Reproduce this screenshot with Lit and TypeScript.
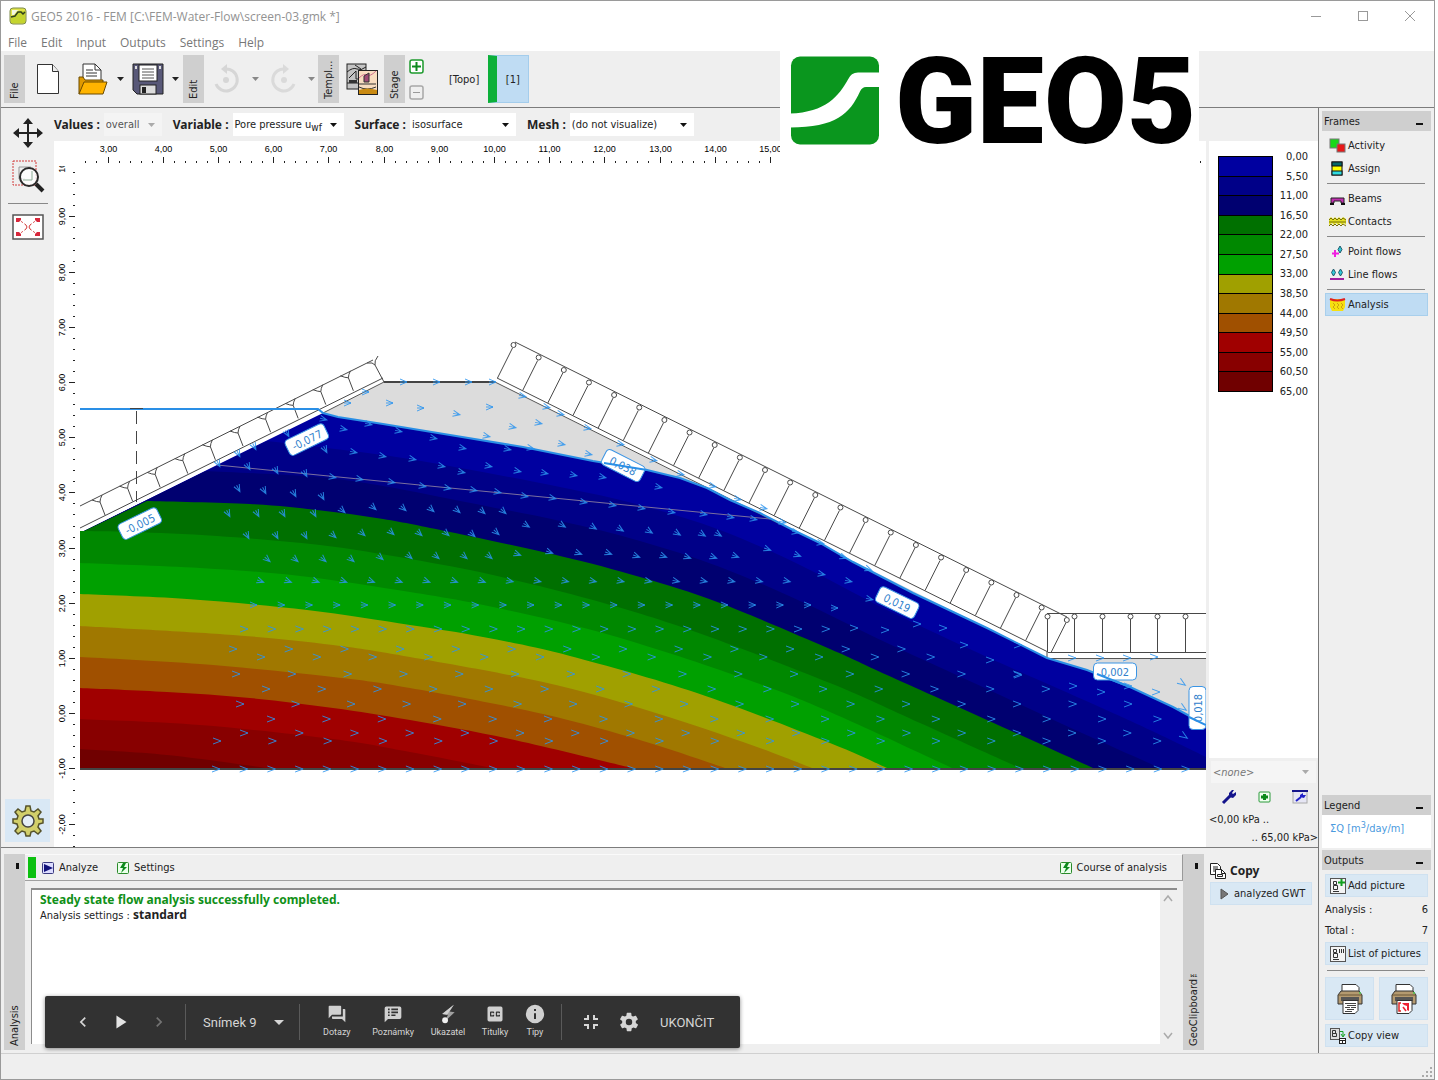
import { LitElement, html, svg, css } from "lit";
import { customElement } from "lit/decorators.js";

type P = [number, number];

const ui = css`
  * { box-sizing: border-box; }
  button {
    font: inherit; color: inherit; background: none; border: 0; padding: 0; margin: 0;
    display: flex; align-items: center; text-align: left; white-space: nowrap;
  }
  svg { display: block; flex: none; }
`;

/* ---------- model data ---------- */

const SURFACE: P[] = [[323, 413], [338, 417], [383, 424], [450, 435], [523, 447], [593, 461], [647, 470], [680, 478],
  [707, 488], [730, 500], [760, 513], [793, 530], [820, 543], [853, 562], [913, 593], [987, 628], [1047, 658],
  [1087, 670], [1130, 687], [1173, 707], [1206, 725]];

const BANDS: { fill: string; top: P[] }[] = [
  { fill: "#0000a0", top: [[80, 533], [217, 465], ...SURFACE] },
  { fill: "#000088", top: [[80, 533], [267, 441], [383, 455], [460, 468], [560, 487], [640, 505], [720, 530], [800, 565], [887, 610], [987, 657], [1093, 704], [1150, 730], [1206, 757]] },
  { fill: "#000070", top: [[80, 533], [206, 471], [317, 477], [383, 486], [460, 501], [560, 521], [640, 541], [720, 567], [800, 601], [887, 643], [987, 689], [1093, 738], [1160, 768]] },
  { fill: "#007000", top: [[80, 533], [147, 501], [250, 504], [317, 510], [383, 519], [450, 532], [560, 556], [640, 577], [720, 603], [830, 649], [887, 675], [987, 720], [1093, 768]] },
  { fill: "#008800", top: [[80, 531], [133, 532], [217, 536], [320, 545], [410, 559], [493, 575], [593, 600], [693, 631], [830, 683], [920, 723], [1020, 768]] },
  { fill: "#00a000", top: [[80, 563], [200, 568], [300, 576], [410, 592], [493, 607], [610, 635], [743, 678], [830, 712], [952, 768]] },
  { fill: "#a0a000", top: [[80, 594], [187, 599], [307, 610], [410, 625], [483, 637], [570, 656], [697, 693], [830, 743], [887, 768]] },
  { fill: "#a07800", top: [[80, 626], [233, 635], [333, 645], [410, 657], [543, 682], [643, 709], [743, 742], [812, 768]] },
  { fill: "#a05000", top: [[80, 657], [200, 664], [333, 677], [410, 688], [543, 714], [643, 741], [725, 768]] },
  { fill: "#a00000", top: [[80, 688], [167, 692], [250, 698], [333, 708], [410, 720], [510, 739], [632, 768]] },
  { fill: "#880000", top: [[80, 719], [200, 725], [333, 739], [410, 752], [492, 768]] },
  { fill: "#700000", top: [[80, 749], [167, 755], [267, 768]] },
];

const row = (x: number, y: number, step: number, n: number): P[] =>
  Array.from({ length: n }, (_, i): P => [x + step * i, y]);

const FLOW: P[] = [
  ...row(216, 769, 27.7, 36), ...row(217, 741, 55.3, 18), ...row(244, 733, 55.2, 17), ...row(271, 719, 55.4, 17),
  ...row(240, 704, 55.5, 17), ...row(266, 689, 55.7, 15), ...row(236, 674, 55.8, 15), ...row(261, 657, 55.8, 13),
  ...row(233, 649, 55.7, 13), ...row(244, 629, 27.7, 22), ...row(253, 605, 27.7, 21), ...row(260, 581, 27.7, 20),
  [267, 559], [295, 559], [323, 559], [351, 559], [380, 557], [409, 556], [436, 556], [464, 556], [489, 556], [517, 554],
  [549, 552], [578, 553], [608, 553], [636, 556], [663, 556], [687, 557], [713, 557], [735, 556],
  [247, 535], [276, 535], [305, 535], [333, 535], [362, 533], [391, 532], [419, 533], [446, 533], [472, 534], [496, 532],
  [228, 513], [257, 513], [283, 513], [314, 513], [342, 510], [373, 507], [403, 508], [431, 509], [457, 510], [482, 511],
  [503, 511], [526, 525], [562, 525], [593, 527], [620, 529], [649, 531], [677, 533], [702, 534], [718, 534],
  [238, 488], [264, 490], [294, 493], [322, 496],
  [218, 463], [248, 466], [276, 470], [305, 473], [332, 477], [359, 479], [391, 482], [422, 486], [447, 488], [473, 490],
  [497, 492], [524, 496], [552, 498], [583, 502], [612, 505], [641, 508], [671, 512], [703, 514], [730, 517], [753, 519],
  [323, 419], [343, 429], [325, 449], [353, 452], [382, 456], [412, 459], [441, 466], [398, 431], [433, 438], [462, 448],
  [507, 449], [530, 448], [488, 466], [461, 472], [517, 471], [544, 473], [573, 475], [602, 477], [658, 487],
  [238, 453], [254, 446], [287, 433], [347, 403], [365, 392], [389, 403], [420, 408], [403, 382], [436, 382], [468, 382],
  [492, 382], [368, 424], [456, 414], [489, 407], [512, 427], [538, 423], [486, 436], [561, 444], [588, 454], [522, 396],
  [546, 407], [560, 414], [587, 428], [620, 444], [653, 460], [680, 474], [712, 486], [737, 499], [763, 508], [782, 522],
  [795, 532], [820, 543], [767, 549], [797, 555], [821, 574], [848, 581], [869, 599], [834, 608], [854, 628], [885, 630],
  [917, 624], [943, 628], [964, 645], [1018, 645], [990, 660], [843, 557], [868, 569], [1018, 675], [1073, 686],
  [1101, 692], [1128, 686], [1156, 692], [1182, 683], [1183, 708], [1184, 736], [1072, 658], [1100, 658], [1127, 658],
  [1154, 657],
];

const flowAngle = ([x, y]: P) => {
  if (y === 736 || y === 683 || y === 708) return 35;
  if (y > 600) return 0;
  if (y > 570) return x > 500 ? 12 : 20;
  if (y > 545) return x > 500 ? 20 : 40;
  if (x < 330) return y > 415 && y !== 419 ? 62 : 15;
  if (y > 500 && x < 520) return 42;
  if (y > 520 && x < 740) return 32;
  return y < 410 && x < 500 ? 0 : 12;
};

const LABELS: [string, number, number, number][] = [
  ["-0,077", 307, 440, -26], ["-0,005", 140, 524, -26], ["0,038", 623, 466, 27],
  ["0,019", 897, 603, 26], ["0,002", 1115, 672, 0], ["0,018", 1198, 708, -90],
];

const fmt = (n: number) => n.toFixed(2).replace(".", ",");
const pts = (a: P[]) => a.map((p) => p.join(",")).join(" ");

/* Curve through the points; stretches left of `from` stay straight. */
const curve = (a: P[], from: number) => {
  let d = `M${a[0]}`;
  for (let i = 0; i < a.length - 1; i++) {
    const p1 = a[i], p2 = a[i + 1];
    if (i < from) { d += `L${p2}`; continue; }
    const p0 = a[Math.max(i - 1, from)], p3 = a[Math.min(i + 2, a.length - 1)];
    d += `C${p1[0] + (p2[0] - p0[0]) / 6} ${p1[1] + (p2[1] - p0[1]) / 6} ${p2[0] - (p3[0] - p1[0]) / 6} ${p2[1] - (p3[1] - p1[1]) / 6} ${p2}`;
  }
  return `${d}L${a[a.length - 1][0]} 768H80Z`;
};

@customElement("model-view")
class ModelView extends LitElement {
  static styles = css`
    :host { display: block; overflow: hidden; background: #fff; min-height: 0; }
    svg { display: block; width: 100%; height: 100%; }
    .num { font: 9px "Liberation Sans", sans-serif; fill: #000; text-anchor: middle; }
    .tick { stroke: #222; fill: none; }
    .hatch { stroke: #484848; fill: none; }
    .soil { stroke: #555; fill: none; }
    .arrow { stroke: #2c94ee; fill: none; stroke-opacity: 0.85; }
    .water { stroke: #2a8fe6; stroke-width: 2; fill: none; }
    .tag { fill: #fff; stroke: #3a94e4; }
    .tagtext { font: 11px "DejaVu Sans Condensed", "Noto Sans", sans-serif; fill: #2f80cc; text-anchor: middle; }
  `;

  private rulers() {
    const X = (v: number) => Math.round(107.5 + 55.2 * (v - 3)) + 0.5;
    const Y = (v: number) => Math.round(382 + 55.2 * (6 - v)) + 0.5;
    let marks = "";
    for (let i = 13; i < 115; i++) {
      const x = X(i / 5);
      marks += i % 5 ? `M${x} 161v2` : `M${x} 157v6`;
    }
    for (let i = -12; i < 50; i++) {
      const y = Y(i / 5);
      marks += i % 5 ? `M73 ${y}h2` : `M69 ${y}h6`;
    }
    const xs = Array.from({ length: 13 }, (_, i) => i + 3);
    const ys = Array.from({ length: 13 }, (_, i) => i - 2);
    return svg`
      <path class="tick" d=${marks}></path>
      ${xs.map((v) => svg`<text class="num" x=${X(v)} y="152">${fmt(v)}</text>`)}
      <g clip-path="url(#ruler)">
        ${ys.map((v) => svg`<text class="num" transform="translate(65 ${Y(v)}) rotate(-90)">${fmt(v)}</text>`)}
      </g>`;
  }

  private hatches() {
    let d = "M80 506L373 360M80 528L383 378M515 342L1067 617M497 378L1048 652M1047 613.5H1206M1048 652.5H1206M1047 652V659";
    const posts: P[] = [];
    for (let i = 0; i < 10; i++) {
      const x = 105 + 27.6 * i, y = 515 - 13.8 * i;
      d += `M${x} ${y}L${x - 5} ${y - 13}Q${x - 8} ${y - 13} ${x - 13} ${y - 15}M${x - 5} ${y - 13}Q${x - 5} ${y - 16} ${x - 3} ${y - 20}`;
    }
    d += "M384 382L375 365Q373 362 367 363M375 365Q374 361 378 356";
    for (let i = 0; i < 23; i++) {
      const x = 513.5 + 25.15 * i, y = 345 + 12.5 * i;
      posts.push([x, y]);
      d += `M${x - 1} ${y + 3}L${x - 16} ${y + 33}`;
    }
    for (let i = 0; i < 6; i++) {
      const x = Math.round(1046.5 + 27.7 * i) + 0.5;
      posts.push([x, 616.5]);
      d += `M${x} 619V652`;
    }
    return svg`<path class="hatch" d=${d}></path>
      ${posts.map(([x, y]) => svg`<circle class="hatch" cx=${x} cy=${y} r="2.5"></circle>`)}`;
  }

  render() {
    return html`<svg viewBox="54 141 1152 706" preserveAspectRatio="xMinYMin slice" role="img" aria-label="Pore pressure isosurfaces">
      <defs><clipPath id="ruler"><rect x="54" y="166" width="26" height="681"></rect></clipPath></defs>
      ${this.rulers()}
      <polygon fill="#dcdcdc" points="323,413 384,382 495,382 1047,658 1206,658 1206,725 1047,670 640,480"></polygon>
      ${BANDS.map((b, i) => svg`<path fill=${b.fill} d=${curve(b.top, i === 0 ? 99 : i < 4 ? 1 : 0)}></path>`)}
      <polyline class="soil" points="323,413 384,382"></polyline>
      <path class="soil" d="M495 382L780 524M1047 658.5H1206"></path>
      <path stroke="#7a6f9e" fill="none" d="M217 465L450 488L770 519"></path>
      <path stroke="#444" stroke-width="2" d="M384 382H495"></path>
      <path stroke="#444" stroke-width="2" d="M80 769H1206"></path>
      <path stroke="#444" stroke-dasharray="13 7" d="M136.500 411V502"></path>
      ${this.hatches()}
      <polyline class="water" points="80,409 318,409 ${pts(SURFACE)}"></polyline>
      <path stroke="#444" d="M130 408.500H143"></path>
      ${LABELS.map(this.tag)}
      <path class="water" d="M604 463L647 470M1097 674L1130 687M1189 717L1206 725"></path>
      ${FLOW.map((p) => svg`<path class="arrow" transform="translate(${p[0]} ${p[1]}) rotate(${flowAngle(p)})"
        d=${p[1] < 620 ? "M-3 -3L4 0L-3 3M-3 0H4" : "M-4 -3L4 0L-4 3"}></path>`)}
    </svg>`;
  }

  private tag = ([t, x, y, a]: [string, number, number, number]) => svg`
    <g transform="translate(${x} ${y}) rotate(${a})">
      <rect class="tag" x="-21.500" y="-9" width="43" height="17" rx="4"></rect>
      <text class="tagtext" y="4">${t}</text>
    </g>`;
}

/* ---------- presenter bar ---------- */

@customElement("presenter-bar")
class PresenterBar extends LitElement {
  static styles = [ui, css`
    :host { display: flex; width: 695px; height: 52px; background: #323232; color: #d6d6d6; border-radius: 2px;
      font: 13px Roboto, sans-serif; align-items: center; box-shadow: 0 1px 4px rgba(0,0,0,.45); }
    .nav { display: flex; flex: none; width: 140px; padding-left: 19px; }
    .nav button, .icon { width: 38px; justify-content: center; }
    .dim { opacity: .4; }
    .slide { flex: none; width: 115px; height: 36px; padding: 0 15px 0 17px; border: solid #5a5a5a; border-width: 0 1px;
      justify-content: space-between; }
    .tools { display: flex; flex: none; justify-content: space-between; width: 262px; height: 36px; padding: 0 16px 0 18px; border-right: 1px solid #5a5a5a; }
    .tool { flex-direction: column; gap: 2px; font-size: 9px; line-height: 12px; }
    .tool:first-child { padding: 0 5px; }
    .end { padding-left: 12px; }
    .tail { display: flex; padding-left: 10px; }
  `];
  private tool(name: string, icon: unknown) {
    return html`<button class="tool"><svg width="20" height="20" viewBox="0 0 24 24" fill="#d0d0d0">${icon}</svg>${name}</button>`;
  }
  render() {
    return html`
      <div class="nav">
        <button aria-label="Previous"><svg width="20" height="20" viewBox="0 0 24 24" fill="#d6d6d6"><path d="M15.400 7.400L14 6l-6 6 6 6 1.400-1.400L10.800 12z"></path></svg></button>
        <button aria-label="Play"><svg width="22" height="22" viewBox="0 0 24 24" fill="#e4e4e4"><path d="M7 5v14l11-7z"></path></svg></button>
        <button class="dim" aria-label="Next"><svg width="20" height="20" viewBox="0 0 24 24" fill="#d6d6d6"><path d="M8.600 16.600L10 18l6-6-6-6-1.400 1.400L13.200 12z"></path></svg></button>
      </div>
      <button class="slide">Snímek 9<svg width="10" height="5" viewBox="0 0 10 5" fill="#d6d6d6"><path d="M0 0h10L5 5z"></path></svg></button>
      <div class="tools">
        ${this.tool("Dotazy", svg`<path d="M21 6h-2v9H6v2c0 .6.400 1 1 1h11l4 4V7c0-.6-.4-1-1-1zm-4 6V3c0-.6-.4-1-1-1H3c-.6 0-1 .4-1 1v14l4-4h10c.6 0 1-.4 1-1z"></path>`)}
        ${this.tool("Poznámky", svg`<path fill-rule="evenodd" d="M20 3H4a2 2 0 0 0-2 2v17l4-4h14a2 2 0 0 0 2-2V5a2 2 0 0 0-2-2zM8 14.500H6v-2h2zm0-3.500H6V9h2zm0-3.500H6v-2h2zm7 7h-5v-2h5zm3-3.500h-8V9h8zm0-3.500h-8v-2h8z"></path>`)}
        ${this.tool("Ukazatel", svg`<path fill="#a0a0a0" d="M19 1L5 12l7 1-4 8L20 10l-6-1z"></path><path d="M19 1L5 12l6 1 3-5z"></path><circle cx="8.500" cy="19.500" r="3.500" fill="#f0f0f0"></circle>`)}
        ${this.tool("Titulky", svg`<path fill-rule="evenodd" d="M19 3H5a2 2 0 0 0-2 2v14a2 2 0 0 0 2 2h14a2 2 0 0 0 2-2V5a2 2 0 0 0-2-2zm-8 8H9.500v-.5h-2v3h2V13H11v1a1 1 0 0 1-1 1H7a1 1 0 0 1-1-1v-4a1 1 0 0 1 1-1h3a1 1 0 0 1 1 1zm7 0h-1.500v-.5h-2v3h2V13H18v1a1 1 0 0 1-1 1h-3a1 1 0 0 1-1-1v-4a1 1 0 0 1 1-1h3a1 1 0 0 1 1 1z"></path>`)}
        ${this.tool("Tipy", svg`<path fill-rule="evenodd" d="M12 1a11 11 0 1 0 0 22 11 11 0 0 0 0-22zm1.200 17h-2.400v-7h2.400zm0-9.500h-2.400V6h2.400z"></path>`)}
      </div>
      <div class="tail">
        <button class="icon" aria-label="Exit full screen"><svg width="24" height="24" viewBox="0 0 24 24" fill="#d6d6d6"><path d="M5 16h3v3h2v-5H5zm3-8H5v2h5V5H8zm6 11h2v-3h3v-2h-5zm2-11V5h-2v5h5V8z"></path></svg></button>
        <button class="icon" aria-label="Options"><svg width="22" height="22" viewBox="0 0 24 24" fill="#d6d6d6"><path d="M19.400 13a7.800 7.800 0 0 0 0-2l2.100-1.600a.5.5 0 0 0 .1-.6l-2-3.500a.5.5 0 0 0-.6-.2l-2.500 1a7 7 0 0 0-1.700-1L14.500 2.400a.5.5 0 0 0-.5-.4h-4a.5.5 0 0 0-.5.4l-.4 2.700a7 7 0 0 0-1.700 1l-2.500-1a.5.5 0 0 0-.6.200l-2 3.500a.5.5 0 0 0 .1.600L4.600 11a7.800 7.800 0 0 0 0 2l-2.100 1.600a.5.5 0 0 0-.1.600l2 3.500c.1.200.4.300.6.200l2.500-1a7 7 0 0 0 1.700 1l.4 2.700c0 .2.200.4.500.4h4c.2 0 .5-.2.500-.4l.4-2.700a7 7 0 0 0 1.700-1l2.500 1c.2.1.5 0 .6-.2l2-3.500a.5.5 0 0 0-.1-.6zM12 15.500a3.500 3.500 0 1 1 0-7 3.500 3.500 0 0 1 0 7z"></path></svg></button>
        <button class="end">UKONČIT</button>
      </div>`;
  }
}

/* ---------- icons ---------- */

const icon = (w: number, h: number, body: unknown) => html`<svg width=${w} height=${h} viewBox="0 0 ${w} ${h}" fill="none" stroke-width="1">${body}</svg>`;
const caret = (c = "#222") => icon(7, 4, svg`<path fill=${c} d="M0 0h7L3.500 4z"></path>`);

const I = {
  app: icon(18, 18, svg`<rect x="1" y="1" width="16" height="16" rx="3" fill="#dfe34a" stroke="#7d8a4a"></rect><path d="M2 16V10q4 1 6-3t5-3h3v12z" fill="#c4d42e"></path><path d="M2 10l4-1 3-4 3 0 2 2 2-2" stroke="#30401c" stroke-width="1.500"></path><path d="M3 3h7l-2 1-3 4H3z" fill="#f4f6e0"></path>`),
  doc: icon(24, 32, svg`<path d="M1.500 1.500h15l6 7v22h-21z" fill="#fff" stroke="#333"></path><path d="M16.500 1.500v7h6" stroke="#333" fill="#eee"></path>`),
  open: icon(32, 34, svg`<path d="M6 18V2h12l6 6v14H6z" fill="#fff" stroke="#333"></path><path d="M18 2v6h6M9 8h7M9 11h11M9 14h11" stroke="#333"></path><path d="M2 32V15h4l2 3h18v4" fill="#e09a00" stroke="#6b4a00"></path><path d="M2 32l5-12h23l-4 12z" fill="#ffb400" stroke="#6b4a00"></path>`),
  save: icon(32, 32, svg`<path d="M1 1h30v30H5l-4-4z" fill="#585878" stroke="#222"></path><rect x="7" y="2" width="18" height="16" fill="#fff" stroke="#222"></rect><path d="M10 6h12M10 9h12M10 12h12M10 15h12" stroke="#555"></path><rect x="8" y="22" width="16" height="9" fill="#dcdcdc" stroke="#222"></rect><rect x="10" y="24" width="4" height="6" fill="#222"></rect><rect x="3" y="3" width="2" height="3" fill="#ddd"></rect><rect x="27" y="3" width="2" height="3" fill="#ddd"></rect>`),
  undo: icon(28, 30, svg`<path d="M12 5a11 11 0 1 1-9 15" stroke="#d6d6d6" stroke-width="3"></path><path d="M14 0v10l-6-5z" fill="#d6d6d6"></path><circle cx="13" cy="16" r="3" fill="#d6d6d6"></circle>`),
  redo: icon(28, 30, svg`<path d="M16 5a11 11 0 1 0 9 15" stroke="#dadada" stroke-width="3"></path><path d="M14 0v10l6-5z" fill="#dadada"></path><circle cx="15" cy="16" r="3" fill="#dadada"></circle>`),
  templ: icon(32, 32, svg`<rect x="1" y="1" width="19" height="25" fill="#c4c4c4" stroke="#222"></rect><path d="M1 9q6-5 10-3t9-2M1 20h19M3 15l7-7v8h9M9 2l6 4v10" stroke="#222"></path><rect x="3" y="17" width="8" height="3" fill="#333"></rect><rect x="12.500" y="7.500" width="19" height="24" fill="#f8dcc0" stroke="#222"></rect><path d="M13 15q5-5 8-3t9-4" stroke="#d07090"></path><path d="M18 19V13l5-3v9z" fill="#a04a76" stroke="#333"></path><path d="M13 21h17M13 24q8 4 17 0" stroke="#333"></path><path d="M13 27q8-3 18 0v4H13z" fill="#c98a12"></path>`),
  plus: icon(15, 15, svg`<rect x="1" y="1" width="13" height="13" rx="2" fill="#fff" stroke="#1d9a2d" stroke-width="1.500"></rect><path d="M7.500 3v9M3 7.500h9" stroke="#0d8a1d" stroke-width="2"></path>`),
  minus: icon(15, 15, svg`<rect x="1" y="1" width="13" height="13" rx="2" stroke="#a8a8a8" stroke-width="1.500"></rect><path d="M4 7.500h7" stroke="#999"></path>`),
  move: icon(32, 32, svg`<path d="M16 4v24M4 16h24" stroke="#222" stroke-width="2"></path><path d="M16 1l5 6H11zM16 31l5-6H11zM1 16l6-5v10zM31 16l-6-5v10z" fill="#222"></path>`),
  zoom: icon(34, 34, svg`<rect x="2" y="2" width="23" height="24" stroke="#d23a3a" stroke-dasharray="2 1"></rect><path d="M8 8h12M8 8v12h6" stroke="#999"></path><circle cx="18" cy="18" r="9" fill="#fff" fill-opacity=".8" stroke="#2a2a2a" stroke-width="2"></circle><path d="M21 12v9h-9" stroke="#8fae98"></path><path d="M25 25l7 7" stroke="#222" stroke-width="4"></path>`),
  fit: icon(32, 26, svg`<rect x="1" y="1" width="30" height="24" fill="#fff" stroke="#555" stroke-width="1.500"></rect><path d="M6 5l8 6M26 5l-8 6M6 21l8-6M26 21l-8-6" stroke="#d23a3a" stroke-dasharray="2 2"></path><path d="M4 8V4h5v2l-2 2zM28 8V4h-5v2l2 2zM4 18v4h5v-2l-2-2zM28 18v4h-5v-2l2-2z" fill="#d8283c"></path><path d="M14 11l1 2-1 2M18 11l-1 2 1 2" stroke="#d23a3a"></path>`),
  gear: icon(32, 32, svg`<path d="M14 1h4l1 5 3 1 4-3 3 3-3 4 1 3 4 0v4l-4 1-1 3 3 4-3 3-4-3-3 1-1 4h-4l-1-4-3-1-4 3-3-3 3-4-1-3-4-1v-4l4 0 1-3-3-4 3-3 4 3 3-1z" fill="#d2cf6a" stroke="#55522a" stroke-width="1.500"></path><circle cx="16" cy="16" r="6" fill="#e4eef8" stroke="#444" stroke-width="1.500"></circle>`),
  activity: icon(17, 16, svg`<rect x="1" y="1" width="9" height="9" fill="#18d818" stroke="#777"></rect><rect x="8" y="6" width="8" height="8" fill="#e81818" stroke="#777"></rect>`),
  assign: icon(17, 16, svg`<rect x="3" y="1" width="10" height="13" fill="#ff0" stroke="#111"></rect><rect x="3" y="1" width="10" height="4" fill="#086868" stroke="#111"></rect><rect x="3" y="10" width="10" height="4" fill="#30dce0" stroke="#111"></rect>`),
  beams: icon(17, 16, svg`<path d="M2 7h13v5h-3v-2H5v2H2z" fill="#c030b0" stroke="#222"></path><path d="M1 13h4M12 13h4" stroke="#111" stroke-width="2"></path>`),
  contacts: icon(17, 16, svg`<path d="M0 5l2-2 2 2 2-2 2 2 2-2 2 2 2-2 3 2v6l-2-2-2 2-2-2-2 2-2-2-2 2-2-2-3 2z" fill="#e4e020"></path><path d="M0 8h17M0 6l2-2 2 2 2-2 2 2 2-2 2 2 2-2 3 2M0 12l2-2 2 2 2-2 2 2 2-2 2 2 2-2 3 2" stroke="#77700a"></path>`),
  point: icon(17, 16, svg`<path d="M6 6v7M3 9.500h7" stroke="#f020e0" stroke-width="2"></path><path d="M11 2l2 3.500-2 3.500-2-3.500z" fill="#30c8d8" stroke="#205868"></path>`),
  line: icon(17, 16, svg`<path d="M4.500 2l2 3.500-2 3.500-2-3.500zM11.500 2l2 3.500-2 3.500-2-3.500z" fill="#30c8d8" stroke="#205868"></path><path d="M1 12h14" stroke="#a020a0" stroke-width="2"></path>`),
  analysis: icon(17, 16, svg`<path d="M1 2h15v8l-2 4H3l-2-4z" fill="#f6e010"></path><path d="M1 2q7 3 15 0" stroke="#e02020" stroke-width="2"></path><path d="M4 6l2 2-2 2 2 2M8 6l2 2-2 2 2 2M12 6l2 2-2 2 2 2" stroke="#d0a010"></path>`),
  addpic: icon(18, 18, svg`<rect x="1.500" y="1.500" width="15" height="15" fill="#f4f4f4" stroke="#555"></rect><path d="M4.500 4.500h3v3h-3zM4.500 8.500h4v4h-4zM4 14.500h6" stroke="#333"></path><path d="M12.500 2v7M9 5.500h7" stroke="#12a020" stroke-width="2"></path>`),
  list: icon(18, 18, svg`<rect x="1.500" y="1.500" width="15" height="15" fill="#f4f4f4" stroke="#555"></rect><path d="M4.500 4.500h3v3h-3zM4.500 8.500h4v4h-4zM4 14.500h6M10.500 4v4M12.500 4v4M14.500 4v4" stroke="#333"></path>`),
  copyview: icon(18, 18, svg`<rect x="1.500" y="1.500" width="9" height="11" fill="#ddd" stroke="#555"></rect><path d="M3.500 3.500h3v3h-3zM3.500 6.500h4v3h-4z" stroke="#333"></path><path d="M11 4.500h3v5M12 7l2 3 2-3" stroke="#12a020"></path><rect x="10.500" y="11.500" width="6" height="5" fill="#fff" stroke="#222"></rect><path d="M10 13.500h7M13.500 13v4" stroke="#222"></path>`),
  analyze: icon(14, 14, svg`<rect x="1.500" y="1.500" width="11" height="11" rx="1" fill="#dcdcff" stroke="#3a3a80"></rect><path d="M3 3l9 4-9 4z" fill="#10107a"></path>`),
  bolt: icon(14, 14, svg`<rect x="1.500" y="1.500" width="11" height="11" rx="1" fill="#eaffea" stroke="#2a8a2a"></rect><path d="M7 2L4 7h3l-2 5 6-6H8l2-4z" fill="#0c8a1c"></path>`),
  copy: icon(17, 17, svg`<path d="M.5.5h7l3 3v8H.5z" fill="#fff" stroke="#222"></path><path d="M3 4h5M3 6h5M3 8h4" stroke="#222"></path><path d="M5.500 6.500h6l4 4v5h-10z" fill="#fff" stroke="#222"></path><path d="M11.500 6.500v4h4M7.500 11.500h5v2h-5z" stroke="#222"></path>`),
  wrench: icon(16, 16, svg`<path d="M2 14L9 7" stroke="#14148c" stroke-width="3"></path><path d="M8 8V4l3-3h2l-2 3 1 1 3-2v3l-3 3z" fill="#14148c"></path>`),
  addsm: icon(13, 12, svg`<rect x="1" y="1" width="11" height="10" rx="1" fill="#f0fff0" stroke="#2a9a3a"></rect><path d="M6.500 3v6M3 6h7" stroke="#0a8a1a" stroke-width="3"></path>`),
  wrenchwin: icon(16, 14, svg`<rect x="1" y="1" width="14" height="12" fill="#e6e6f4" stroke="#aaa"></rect><path d="M0 1h16" stroke="#14148c" stroke-width="2"></path><path d="M4 11l5-4" stroke="#2020c8" stroke-width="2"></path><path d="M8 7V5l3-2 0 2 3 0-2 3z" fill="#2020c8"></path>`),
  winmin: icon(12, 12, svg`<path d="M1 6.500h10" stroke="#999"></path>`),
  winmax: icon(12, 12, svg`<rect x="1.500" y="1.500" width="9" height="9" stroke="#999"></rect>`),
  winclose: icon(12, 12, svg`<path d="M1 1l10 10M11 1L1 11" stroke="#999"></path>`),
};

const printer = (red: boolean) => icon(28, 32, svg`
  <path d="M6 9V1.500h14l3 3V9" fill="#fff" stroke="#333"></path>
  <path d="M2 12l3-4h18l3 4v9H2z" fill="#b49a70" stroke="#333"></path><path d="M2 12h24" stroke="#6a5636"></path>
  <rect x="5" y="14" width="18" height="4" fill="#555"></rect><circle cx="24" cy="10" r="1" fill="#5c5"></circle>
  <path d="M7 17.500h15v10l-3 3H7z" fill="#fff" stroke="#333"></path>
  ${red ? svg`<path d="M11 20H9v8h2" stroke="#d22" stroke-width="1.500"></path><path d="M12 20h7v8l-2-1v-4l-3-1z" fill="#e23"></path><path d="M13 24l3 4" stroke="#e23" stroke-width="1.500"></path>`
    : svg`<path d="M9 20.500h11M11 22.500h9M9 24.500h5M15 24.500h5M11 26.500h7M9 28.500h7" stroke="#444"></path>`}`);

const FRAMES: ([string, unknown] | null)[] = [
  ["Activity", I.activity], ["Assign", I.assign], null, ["Beams", I.beams], ["Contacts", I.contacts], null,
  ["Point flows", I.point], ["Line flows", I.line], null, ["Analysis", I.analysis],
];

@customElement("app-root")
class AppRoot extends LitElement {
  static styles = [ui, css`
    :host { display: block; background: #fff; color: #222; font: 11px "DejaVu Sans Condensed", "Noto Sans", sans-serif; }
    .window { position: relative; display: flex; flex-direction: column; height: 100vh; margin-right: 3px;
      border: 1px solid #9a9a9a; background: #efefef; }
    b { font: 700 12px/14px "Noto Sans", sans-serif; }

    .title { display: flex; align-items: center; height: 30px; padding: 0 18px 0 8px; gap: 4px; background: #fff; color: #929292;
      font: 12px "Open Sans", "Noto Sans", sans-serif; }
    .title span { flex: 1; }
    .wins { display: flex; gap: 35px; }
    .menu { display: flex; gap: 14px; height: 20px; padding: 2px 7px 0; align-items: center; background: #fff; color: #777;
      font: 12px "Open Sans", "Noto Sans", sans-serif; }

    .toolbar { display: flex; align-items: center; height: 57px; padding: 0 3px; border-bottom: 1px solid #7c7c7c; }
    .tab { display: flex; justify-content: flex-start; align-items: center; width: 21px; height: 48px; background: #cfcfcf;
      writing-mode: vertical-rl; transform: rotate(180deg); padding: 4px 0; line-height: 21px; }
    .files { display: flex; align-items: center; width: 158px; padding-left: 11px; gap: 8px; }
    .new { margin-right: 9px; }
    .edits { display: flex; align-items: center; width: 114px; padding: 0 3px 0 9px; justify-content: space-between; }
    .tmpl { width: 45px; justify-content: center; }
    .stages { display: flex; flex-direction: column; gap: 11px; padding: 0 25px 0 4px; }
    .topo { height: 48px; padding-right: 9px; }
    .stage { height: 48px; width: 41px; border: 1px solid #a4cdec; border-left: 9px solid #0cb03a; background: #bfdcf3; justify-content: center; }

    .main { display: flex; flex: 1; min-height: 0; }
    .left { display: flex; flex-direction: column; flex: 1; min-width: 0; }
    .work { display: flex; flex: 1; min-height: 0; border-bottom: 1px solid #7c7c7c; }
    .tools { display: flex; flex-direction: column; align-items: center; width: 53px; padding: 9px 0 5px; gap: 10px; }
    .tools hr { width: 40px; margin: 0; border: 0; border-top: 1px solid #888; }
    .tools .gear { margin-top: auto; width: 45px; height: 43px; justify-content: center; background: #d9e8f5; }
    .view { display: flex; flex-direction: column; flex: 1; min-width: 0; }
    .opts { display: flex; align-items: center; height: 33px; gap: 11px; }
    .opts label { display: flex; align-items: center; gap: 4px; }
    .combo { position: relative; display: flex; align-items: center; height: 23px; background: #fff; }
    .combo select { width: 100%; height: 100%; margin: 0; padding: 0 0 0 2px; border: 0; border-radius: 0; background: none;
      font: inherit; color: inherit; opacity: 1; appearance: none; }
    .combo svg { position: absolute; right: 7px; pointer-events: none; }
    .combo .shown { padding-left: 2px; white-space: nowrap; }
    .combo .cover { position: absolute; inset: 0; opacity: 0; }
    .combo sub { line-height: 0; font-size: 10px; }
    .w58 { width: 58px; background: #f4f4f4; color: #555; }
    .w111 { width: 111px; } .w106 { width: 106px; } .w124 { width: 124px; }
    .panes { display: flex; flex: 1; min-height: 0; }
    .panes model-view { flex: 1; }
    .scale { display: flex; flex-direction: column; width: 112px; border-left: 3px solid #efefef; }
    .scalebox { display: flex; flex: 1; padding: 15px 10px 0 9px; background: #fff; align-items: flex-start; justify-content: space-between; }
    .bar { display: grid; grid-auto-rows: 1fr; width: 55px; height: 236px; border: solid #000; border-width: 1px 1px 0; }
    .cell { border-bottom: 1px solid #000; }
    .values { display: flex; flex-direction: column; justify-content: space-between; height: 249px; margin-top: -6px; line-height: 14px; text-align: right; }
    .range { padding: 3px 2px 0; }
    .none { width: 105px; height: 22px; color: #777; background: #f5f5f5; font-style: italic; }
    .rangetools { display: flex; justify-content: space-between; align-items: center; height: 28px; padding: 0 8px 0 10px; }
    .lo, .hi { line-height: 18px; margin: 0 -2px; }
    .hi { text-align: right; }

    .bottom { display: flex; height: 205px; padding: 6px 0 3px 3px; }
    .tall { height: 196px; justify-content: space-between; padding-bottom: 9px; }
    .pin { width: 3px; height: 6px; background: #111; align-self: center; margin-left: -6px; }
    .log { display: flex; flex-direction: column; flex: 1; min-width: 0; }
    .logbar { display: flex; align-items: center; height: 27px; padding: 0 15px 0 3px; border-right: 1px solid #999; border-bottom: 1px solid #a0a0a0; border-top: 1px solid #fafafa; }
    .logbar button { gap: 4px; margin-right: 18px; }
    .logbar .course { margin: 0 0 0 auto; }
    .green { width: 8px; height: 21px; margin-right: 5px; background: #0cc010; }
    .out { display: flex; flex: 1; margin: 7px 6px 6px 6px; border: solid #8c8c8c; border-width: 2px 0 0 1px; background: #fff; }
    .msg { flex: 1; padding: 3px 8px; line-height: 14px; }
    .ok { color: #109018; }
    .bars { display: flex; flex-direction: column; justify-content: space-between; width: 17px; padding: 4px 3px; background: #efefef; }
    .clip { width: 114px; padding: 6px; }
    .cliphead { display: flex; align-items: center; gap: 3px; height: 22px; }
    .soft { background: #d9e8f4; border: 1px solid #cfe1f0; height: 23px; }
    .gwt { width: 102px; padding-left: 9px; gap: 5px; }

    .side { display: flex; flex-direction: column; width: 116px; border-left: 1px solid #777; padding: 3px 3px 6px; }
    .head { display: flex; justify-content: space-between; align-items: center; height: 20px; padding: 0 8px 0 2px; background: #cfcfcf; }
    .head i { width: 7px; height: 2px; background: #111; margin-top: 6px; }
    .list { display: flex; flex-direction: column; padding: 3px 3px; }
    .list hr, .outs hr { width: 98px; margin: 3px 0 3px 2px; border: 0; border-top: 1px solid #888; }
    .item { height: 23px; padding-left: 4px; gap: 2px; }
    .on { background: #bfdcf3; border: 1px solid #a8cfec; padding-left: 3px; }
    .grow { flex: 1; }
    .legend { height: 33px; margin-bottom: 2px; padding: 7px 8px; background: #fff; color: #4a9ade; }
    .legend sup { line-height: 0; font-size: 9px; vertical-align: 4px; }
    .outs { display: flex; flex-direction: column; padding: 4px 3px 0; }
    .outs .soft { padding-left: 3px; gap: 1px; }
    .outs hr { margin-top: 5px; }
    .sum { display: flex; justify-content: space-between; line-height: 21px; }
    .sums { padding: 2px 0 1px; }
    .prints { display: flex; justify-content: space-between; margin: 3px 0 4px; }
    .outs .print { width: 49px; height: 43px; padding: 0; justify-content: center; }

    .status { display: flex; justify-content: flex-end; align-items: flex-end; height: 26px; border-top: 1px solid #d0d0d0; padding: 2px; }
    .brand { position: absolute; top: 50px; right: 235px; display: flex; gap: 15px; width: 419px; height: 116px; padding: 5px 0 0 10px; background: #fff; }
    .brand span { font: 900 120px/92px Roboto, sans-serif; color: #000; }
    .present { position: absolute; left: 44px; bottom: 31px; }
  `];

  private tab(text: string) { return html`<div class="tab">${text}</div>`; }
  private combo(label: string, cls: string, value: string, off = false, rich?: unknown) {
    return html`<label><b>${label}</b><span class="combo ${cls}">
      ${rich ? html`<span class="shown">${rich}</span>` : null}
      <select class=${rich ? "cover" : ""} ?disabled=${off}><option>${value}</option></select>${caret(off ? "#aaa" : "#111")}</span></label>`;
  }

  render() {
    return html`<div class="window">
      <div class="title">${I.app}<span>GEO5 2016 - FEM [C:\\FEM-Water-Flow\\screen-03.gmk *]</span>
        <div class="wins"><button aria-label="Minimize">${I.winmin}</button><button aria-label="Maximize">${I.winmax}</button><button aria-label="Close">${I.winclose}</button></div></div>
      <nav class="menu">${["File", "Edit", "Input", "Outputs", "Settings", "Help"].map((m) => html`<button>${m}</button>`)}</nav>
      <div class="toolbar">
        ${this.tab("File")}
        <div class="files"><button class="new" aria-label="New">${I.doc}</button><button aria-label="Open">${I.open}</button><button aria-label="Recent">${caret()}</button>
          <button aria-label="Save">${I.save}</button><button aria-label="Save as">${caret()}</button></div>
        ${this.tab("Edit")}
        <div class="edits"><button aria-label="Undo">${I.undo}</button><button aria-label="Undo list">${caret("#888")}</button>
          <button aria-label="Redo">${I.redo}</button><button aria-label="Redo list">${caret("#888")}</button></div>
        ${this.tab("Templ...")}
        <button class="tmpl" aria-label="Templates">${I.templ}</button>
        ${this.tab("Stage")}
        <div class="stages"><button aria-label="Add stage">${I.plus}</button><button aria-label="Remove stage">${I.minus}</button></div>
        <button class="topo">[Topo]</button><button class="stage">[1]</button>
      </div>
      <div class="main">
        <div class="left">
          <div class="work">
            <div class="tools">
              <button aria-label="Pan">${I.move}</button><button aria-label="Zoom window">${I.zoom}</button><hr>
              <button aria-label="Fit view">${I.fit}</button><button class="gear" aria-label="View settings">${I.gear}</button>
            </div>
            <div class="view">
              <div class="opts">
                ${this.combo("Values :", "w58", "overall", true)}
                ${this.combo("Variable :", "w111", "Pore pressure", false, html`Pore pressure u<sub>wf</sub>`)}
                ${this.combo("Surface :", "w106", "isosurface")}
                ${this.combo("Mesh :", "w124", "(do not visualize)")}
              </div>
              <div class="panes">
                <model-view></model-view>
                <div class="scale">
                  <div class="scalebox">
                    <div class="bar">${BANDS.map((b) => html`<div class="cell" style="background:${b.fill}"></div>`)}</div>
                    <div class="values">${Array.from({ length: 13 }, (_, i) => html`<span>${fmt(i === 12 ? 65 : i * 5.5)}</span>`)}</div>
                  </div>
                  <div class="range">
                    <div class="combo none"><select aria-label="Stored range" disabled><option>&lt;none&gt;</option></select>${caret("#aaa")}</div>
                    <div class="rangetools"><button aria-label="Range settings">${I.wrench}</button><button aria-label="Add range">${I.addsm}</button><button aria-label="Manage ranges">${I.wrenchwin}</button></div>
                    <div class="lo">&lt;0,00 kPa ..</div><div class="hi">.. 65,00 kPa&gt;</div>
                  </div>
                </div>
              </div>
            </div>
          </div>
          <div class="bottom">
            <div class="tab tall">Analysis<span class="pin"></span></div>
            <div class="log">
              <div class="logbar"><span class="green"></span><button>${I.analyze}Analyze</button><button>${I.bolt}Settings</button><button class="course">${I.bolt}Course of analysis</button></div>
              <div class="out">
                <div class="msg"><b class="ok">Steady state flow analysis successfully completed.</b><br>Analysis settings : <b>standard</b></div>
                <div class="bars">${icon(10, 8, svg`<path d="M1 7l4-5 4 5" stroke="#aaa" stroke-width="1.500"></path>`)}${icon(10, 8, svg`<path d="M1 1l4 5 4-5" stroke="#aaa" stroke-width="1.500"></path>`)}</div>
              </div>
            </div>
            <div class="tab tall">GeoClipboard™<span class="pin"></span></div>
            <div class="clip">
              <div class="cliphead">${I.copy}<b>Copy</b></div>
              <button class="soft gwt">${icon(9, 12, svg`<path d="M1 1l7 5-7 5z" fill="#777" stroke="#555"></path>`)}analyzed GWT</button>
            </div>
          </div>
        </div>
        <aside class="side">
          <div class="head">Frames<i></i></div>
          <div class="list">${FRAMES.map((f) => f ? html`<button class="item ${f[0] === "Analysis" ? "on" : ""}">${f[1]}${f[0]}</button>` : html`<hr>`)}</div>
          <div class="grow"></div>
          <div class="head">Legend<i></i></div>
          <div class="legend">ΣQ [m<sup>3</sup>/day/m]</div>
          <div class="head">Outputs<i></i></div>
          <div class="outs">
            <button class="soft">${I.addpic}Add picture</button>
            <div class="sums"><div class="sum"><span>Analysis :</span><span>6</span></div><div class="sum"><span>Total :</span><span>7</span></div></div>
            <button class="soft">${I.list}List of pictures</button>
            <hr>
            <div class="prints"><button class="soft print" aria-label="Print document">${printer(false)}</button><button class="soft print" aria-label="Print picture">${printer(true)}</button></div>
            <button class="soft">${I.copyview}Copy view</button>
          </div>
        </aside>
      </div>
      <div class="status">${icon(10, 10, svg`<path fill="#aaa" d="M8 0h2v2H8zM4 4h2v2H4zM8 4h2v2H8zM0 8h2v2H0zM4 8h2v2H4zM8 8h2v2H8z"></path>`)}</div>
      <div class="brand">
        <svg width="90" height="89" viewBox="790 55.500 90 89"><rect x="791" y="56" width="88" height="88" rx="9" fill="#0a961e"></rect>
          <path fill="#fff" d="M790 113C826 112 839 95 848 79Q851 72 858 72H880V86.500H866Q862 86.500 860 91C850 113 836 127 790 127z"></path></svg>
        <span>GEO5</span>
      </div>
      <presenter-bar class="present"></presenter-bar>
    </div>`;
  }
}
